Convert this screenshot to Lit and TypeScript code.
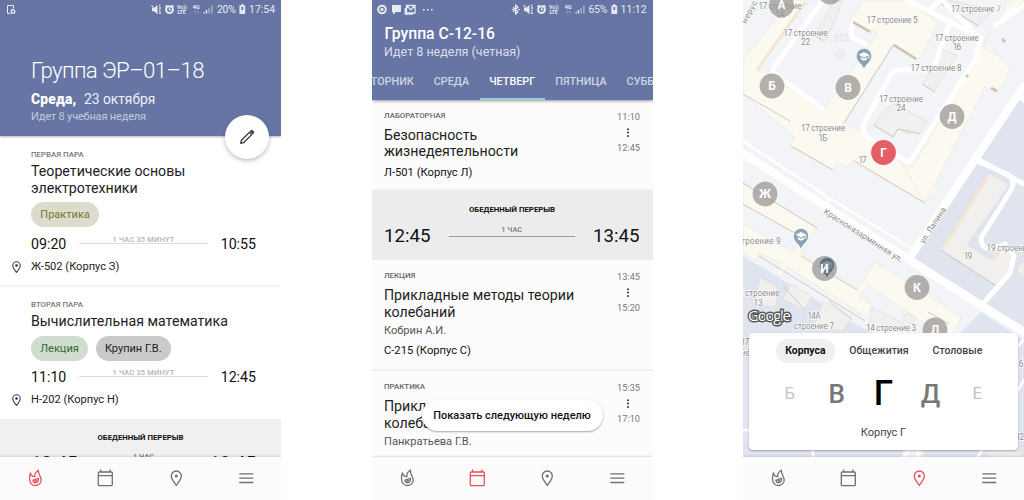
import { LitElement, html, css, svg } from "lit";
import { customElement, property } from "lit/decorators.js";

const flame = svg`<path d="M-4.9 -4.8C-6.2 -2.2 -6 0.2 -5.7 2C-5.1 5.4 -2.8 7.5 0.2 7.5C3.5 7.5 5.9 5 5.9 1.9C5.9 -1.3 3 -3 3 -7.7C0.8 -6.4 -0.9 -4 -0.5 -1.3C-2.4 -1.2 -4.2 -2.2 -4.9 -4.8Z"/><path d="M3.2 0.4C1.4 0.4 0.2 1.9 -2.3 2.2C-2.2 4 -1 4.7 0.3 4.7C2.4 4.7 3.3 2.8 3.2 0.4ZM-0.6 3.3L1.6 2.3" />`;
const calendar = svg`<rect x="-7" y="-6" width="14" height="13.7" rx="1"/><path d="M-7 -2.3H7M-4.7 -8.5V-6M4.7 -8.5V-6"/>`;
const pin = svg`<path d="M0 7.3C-2.6 3.9 -5 1.2 -5 -2A5 5 0 0 1 5 -2C5 1.2 2.6 3.9 0 7.3Z"/><circle cx="0" cy="-2" r="1.6" fill="currentColor" stroke="none"/>`;
const menu = svg`<path d="M-7 -4.1H7M-7 0.2H7M-7 4.5H7"/>`;

@customElement("bottom-nav")
class BottomNav extends LitElement {
  @property({ type: Number }) active = 0;
  static styles = css`
    :host { display: grid; grid-template-columns: repeat(4, 1fr); height: 43px; flex: none; background: #fbfbfb; box-shadow: 0 -1px 2px rgba(0,0,0,.12); position: relative; }
    svg { display: block; width: 24px; height: 24px; margin: 9px auto 0; fill: none; stroke: currentColor; stroke-width: 1.3; color: #707070; }
    svg.on { color: #e8505b; }
  `;
  render() {
    return [flame, calendar, pin, menu].map((i, n) => html`<svg class=${n === this.active ? "on" : ""} viewBox="-12.3 -12 24 24">${i}</svg>`);
  }
}

@customElement("status-bar")
class StatusBar extends LitElement {
  @property() battery = "";
  @property() time = "";
  @property({ type: Boolean }) busy = false;
  static styles = css`
    :host { display: flex; justify-content: space-between; height: 20px; padding: 0 6px 0 5px; color: #e6e9f1; font: 400 10.4px/20px Roboto, sans-serif; }
    svg { display: block; height: 20px; overflow: visible; fill: none; stroke: currentColor; }
    .right { display: flex; }
    .pct { width: 21px; letter-spacing: -.25px; white-space: nowrap; }
    .time { width: 29px; text-align: right; }
    text { fill: currentColor; stroke: none; font-family: Roboto, sans-serif; font-weight: 700; }
    .dim { opacity: .45; }
    .solid { fill: currentColor; stroke: none; }
    .level { stroke: #6675a3; stroke-width: 1.8; }
  `;
  render() {
    return html`
      ${this.busy
        ? html`<svg width="60" viewBox="0 0 60 20"><circle cx="5" cy="9.5" r="3.8" stroke-width="2"/><rect class="solid" x="3.6" y="8.1" width="2.8" height="2.8"/><path class="solid" d="M15 5h9v7h-5l-3 2.5V12h-1z"/><path d="M29.5 5.5h8.5v7.5h-8.5zM28.2 8v6.2H36M30 6l3.8 3.9 3.7-3.9" stroke-width="1.3"/><path class="solid" d="M46 9h1.6v1.6H46zM50 9h1.6v1.6H50zM54 9h1.6v1.6H54z"/></svg>`
        : html`<svg width="20" viewBox="0 0 20 20"><path d="M5.5 13.5H2.5V5.5H8.5V8.5"/><circle cx="8" cy="11.6" r="1.8" stroke-width="1.4"/></svg>`}
      <div class="right">
        <svg width="78" viewBox="0 0 78 20">
          ${this.busy ? svg`<path stroke-width="1.2" d="M2 7.3L7 11.8L4.6 14V5L7 7.2L2 11.7M.8 9.5H2.8M7 9.5H9"/>` : ""}
          <path class="solid" d="M13 8h2l3.5-3v9L15 11.3h-2z"/><path d="M12.5 5L18.5 13.5" stroke-width="1.1"/><path d="M20 5.5h1.5M20 8h2M20 10.5h1.5M20 13h2" stroke-width="1.3"/>
          <circle cx="30.5" cy="9.7" r="3.4" stroke-width="2"/><path d="M30.5 7.8V10h1.7M26.3 7l2-2M34.7 7l-2-2" stroke-width="1.2"/>
          <text x="38" y="8.8" font-size="5.2">Vo))</text><text x="38.4" y="13.9" font-size="5.2">LTE</text>
          <text x="53.5" y="8.8" font-size="5.8">4G</text><path class="dim" d="M56 10.5v3M59 10.5v3" />
          <path class="solid" d="M64.5 12h1.3v1.5h-1.3zM66.7 10h1.5v3.5h-1.5z"/><path class="solid dim" d="M69.3 8h1.7v5.5h-1.7zM72 5.5h1.7v8H72z"/>
        </svg>
        <span class="pct">${this.battery}</span>
        <svg width="8" viewBox="0 0 8 20"><path class="solid" d="M3 4.2h2.6v1.2h1.6v8.6H1.4V5.4H3z"/><path class="level" d="M4.3 7v3"/></svg>
        <span class="time">${this.time}</span>
      </div>`;
  }
}

const pause = css`
  .break { box-sizing: border-box; height: 69px; padding: 14px 0 0; background: #ececec; }
  .break-title { font: 700 7.8px/10px Roboto, sans-serif; color: #111; text-align: center; }
  .span { display: flex; align-items: flex-start; color: #111; }
  .span.big { margin: 9.5px 13px 0 12.5px; font: 400 18.7px/22px Roboto, sans-serif; }
  .rule { flex: 1; text-align: center; border-bottom: 1px solid #9a9a9a; color: #777; }
  .big .rule { margin: 0 18px; height: 11px; font: 500 7.4px/9px Roboto, sans-serif; }
`;

@customElement("today-screen")
class TodayScreen extends LitElement {
  static styles = [pause, css`
    :host { display: flex; flex-direction: column; width: 281px; height: 500px; background: #fff; position: relative; overflow: hidden; font-family: Roboto, sans-serif; }
    .head { box-sizing: border-box; height: 136px; flex: none; background: #6675a3; color: #fff; box-shadow: 0 1px 2px rgba(0,0,0,.3); }
    .group { margin: 36px 0 0 31px; font: 300 22.3px/28px Roboto, sans-serif; letter-spacing: -.63px; }
    .date { margin: 6px 0 0 31px; font: 400 13.8px/18px Roboto, sans-serif; color: #eef0f6; }
    .date b { font-weight: 900; color: #fff; letter-spacing: .2px; margin-right: 7.5px; }
    .week { margin: 2px 0 0 31px; font: 400 11px/14px Roboto, sans-serif; letter-spacing: -.17px; color: #c3cadd; }
    .fab { position: absolute; left: 225px; top: 115px; width: 44px; height: 44px; border-radius: 50%; background: #fff; box-shadow: 0 2px 4px rgba(0,0,0,.25); }
    .fab svg { display: block; margin: 14px; width: 16px; height: 16px; }
    .body { flex: 1; min-height: 0; overflow: hidden; }
    .lesson { padding: 14px 25px 11px 31px; border-bottom: 2px solid #f5f5f5; }
    .lesson + .lesson { padding: 13px 25px 12px 31px; border-bottom: 0; }
    .no { font: 500 7.9px/10px Roboto, sans-serif; color: #777; }
    .name { margin-top: 3px; font: 400 14.2px/16.6px Roboto, sans-serif; color: #222; white-space: pre-line; }
    .chips { display: flex; gap: 7.5px; margin-top: 6px; }
    .chip { height: 25px; padding: 0 9.3px; border-radius: 13px; font: 400 11px/26px Roboto, sans-serif; }
    .olive { background: #dcdccd; color: #767630; }
    .green { background: #d0dccf; color: #2f6b2c; }
    .gray { background: #cacaca; color: #222; }
    .small { margin-top: 7.5px; font: 400 14.2px/18px Roboto, sans-serif; }
    .small .rule { margin: 0 12.5px; height: 8px; font: 500 7.4px/9px Roboto, sans-serif; letter-spacing: .2px; color: #b4b4b4; border-color: #ddd; }
    .room { display: flex; align-items: center; margin: 7px 0 0 -19px; font: 400 11.1px/14px Roboto, sans-serif; color: #222; }
    .lesson + .lesson .chips { margin-top: 6.4px; }
    .lesson + .lesson .room { margin-top: 6.6px; }
    .room svg { width: 9px; height: 12px; margin-right: 10px; fill: none; stroke: #444; stroke-width: 1.5; }
    .body .break { background: #f0f0f0; }
    .body .big { margin: 9.5px 25px 0 31px; }
    .body .big .rule { margin: 0 2px; border: 0; }
  `];
  lesson(no: string, name: string, chips: string[][], from: string, to: string, room: string) {
    return html`<div class="lesson">
      <div class="no">${no}</div><div class="name">${name}</div>
      <div class="chips">${chips.map(([c, t]) => html`<span class="chip ${c}">${t}</span>`)}</div>
      <div class="span small"><span>${from}</span><span class="rule">1 ЧАС 35 МИНУТ</span><span>${to}</span></div>
      <div class="room"><svg viewBox="-6 -8 12 16">${pin}</svg>${room}</div>
    </div>`;
  }
  render() {
    return html`
      <div class="head">
        <status-bar battery="20%" time="17:54"></status-bar>
        <div class="group">Группа ЭР–01–18</div>
        <div class="date"><b>Среда,</b>23 октября</div>
        <div class="week">Идет 8 учебная неделя</div>
      </div>
      <div class="body">
        ${this.lesson("ПЕРВАЯ ПАРА", "Теоретические основы\nэлектротехники", [["olive", "Практика"]], "09:20", "10:55", "Ж-502 (Корпус З)")}
        ${this.lesson("ВТОРАЯ ПАРА", "Вычислительная математика", [["green", "Лекция"], ["gray", "Крупин Г.В."]], "11:10", "12:45", "Н-202 (Корпус Н)")}
        <div class="break"><div class="break-title">ОБЕДЕННЫЙ ПЕРЕРЫВ</div>
          <div class="span big"><span>12:45</span><span class="rule">1 ЧАС</span><span>13:45</span></div></div>
      </div>
      <bottom-nav .active=${0}></bottom-nav>
      <div class="fab"><svg viewBox="0 0 16 16" fill="none" stroke="#333" stroke-width="1.3"><path d="M1.8 14.2L2.4 11.3L10.4 3.3L12.7 5.6L4.7 13.6Z"/><path d="M11.6 2.1L13.9 4.4L14.5 3.2L12.8 1.5Z" fill="#333"/></svg></div>`;
  }
}

@customElement("week-screen")
class WeekScreen extends LitElement {
  static styles = [pause, css`
    :host { display: flex; flex-direction: column; width: 281px; height: 500px; background: #fcfcfc; position: relative; overflow: hidden; font-family: Roboto, sans-serif; }
    .head { box-sizing: border-box; height: 100px; flex: none; background: #6675a3; color: #fff; box-shadow: 0 1px 3px rgba(0,0,0,.4); }
    .group { margin: 5px 0 0 13px; font: 500 15.7px/18px Roboto, sans-serif; }
    .week { margin: 1px 0 0 12.5px; font: 400 12.5px/16px Roboto, sans-serif; color: #dbdfeb; }
    .tabs { display: flex; gap: 20px; width: 281px; overflow: hidden; height: 36px; margin-top: 4px; box-sizing: border-box; font: 500 10.8px/36px Roboto, sans-serif; color: #ced4e3; }
    .tab:first-child { margin-left: -7.4px; }
    .tab { white-space: nowrap; box-sizing: border-box; height: 36px; }
    .tab.on { color: #fff; border-bottom: 2px solid #8fd0cf; padding: 0 9.5px; margin: 0 -9.5px; }
    .body { flex: 1; min-height: 0; overflow: hidden; }
    .lesson { display: flex; justify-content: space-between; padding: 11px 12.5px 11px; border-bottom: 2px solid #f0f0f0; }
    .lesson:first-child { padding-bottom: 9px; }
    .kind { font: 500 7.9px/10px Roboto, sans-serif; color: #666; }
    .name { margin-top: 6px; font: 400 14.2px/16.4px Roboto, sans-serif; color: #222; white-space: pre-line; }
    .who { margin-top: 4px; font: 400 11.1px/14px Roboto, sans-serif; color: #555; }
    .room { margin-top: 6.3px; font: 400 11.2px/14px Roboto, sans-serif; color: #111; }
    .when { display: flex; flex-direction: column; align-items: flex-end; font: 400 9.2px/12px Roboto, sans-serif; color: #777; }
    .when svg { display: block; width: 4px; height: 12px; margin: 3.5px 10px 3.5px 0; fill: #333; }
    .pill { position: absolute; left: 50px; top: 400px; width: 181px; height: 31px; border-radius: 16px; background: #fff; box-shadow: 0 1px 2px rgba(0,0,0,.35); font: 500 11px/32px Roboto, sans-serif; text-align: center; color: #111; }
  `];
  lesson(kind: string, name: string, who: string, room: string, from: string, to: string) {
    return html`<div class="lesson"><div><div class="kind">${kind}</div><div class="name">${name}</div>
      ${who ? html`<div class="who">${who}</div>` : ""}${room ? html`<div class="room">${room}</div>` : ""}</div>
      <div class="when"><span>${from}</span><svg viewBox="0 0 4 12"><circle cx="2" cy="2.2" r="1"/><circle cx="2" cy="5.6" r="1"/><circle cx="2" cy="9" r="1"/></svg><span>${to}</span></div></div>`;
  }
  render() {
    return html`
      <div class="head">
        <status-bar busy battery="65%" time="11:12"></status-bar>
        <div class="group">Группа С-12-16</div>
        <div class="week">Идет 8 неделя (четная)</div>
        <div class="tabs">${["ВТОРНИК", "СРЕДА", "ЧЕТВЕРГ", "ПЯТНИЦА", "СУББОТА"].map((d) => html`<span class="tab ${d === "ЧЕТВЕРГ" ? "on" : ""}">${d}</span>`)}</div>
      </div>
      <div class="body">
        ${this.lesson("ЛАБОРАТОРНАЯ", "Безопасность\nжизнедеятельности", "", "Л-501 (Корпус Л)", "11:10", "12:45")}
        <div class="break"><div class="break-title">ОБЕДЕННЫЙ ПЕРЕРЫВ</div>
          <div class="span big"><span>12:45</span><span class="rule">1 ЧАС</span><span>13:45</span></div></div>
        ${this.lesson("ЛЕКЦИЯ", "Прикладные методы теории\nколебаний", "Кобрин А.И.", "С-215 (Корпус С)", "13:45", "15:20")}
        ${this.lesson("ПРАКТИКА", "Прикладные методы теории\nколебаний", "Панкратьева Г.В.", "", "15:35", "17:10")}
      </div>
      <bottom-nav .active=${1}></bottom-nav>
      <div class="pill">Показать следующую неделю</div>`;
  }
}

const labels: [number, number, string, number][] = [
  [37, 9, "17 строение", 43], [37, 18, "1А", 9],
  [62.5, 35.5, "17 строение", 44], [62.5, 44.5, "22", 9],
  [149, 23, "17 строение 5", 51], [233, 12, "17 строение 7", 50],
  [213.5, 40.5, "17 строение", 44], [214, 49.5, "16", 8],
  [193, 71, "17 строение 8", 51], [158, 102, "17 строение", 44], [158, 111, "24", 9],
  [80, 131, "17 строение", 44], [80, 140.5, "1Б", 9], [119.5, 162.5, "17", 8],
  [12, 244, "7 строение 9", 51], [225, 259, "19", 8], [266, 251, "19 строение", 45],
  [14, 296, "14 строение", 45], [15, 305.5, "13", 9], [71, 318.5, "14А", 13],
  [71, 328.5, "строение 7", 40], [148, 331, "14 строение 3", 50],
  [2, 345, "17", 8], [-10, 356, "строение", 34], [278, 367, "6", 4], [277, 440, "12", 8],
];
const pins: [number, number, string, string][] = [
  [38.5, 5, "А", ""], [87, -8, "", ""], [29, 86, "Б", ""], [105, 87.5, "В", ""], [209, 116.5, "Д", ""],
  [140.5, 152.5, "Г", "hot"], [22, 194, "Ж", ""], [81.5, 268.5, "И", ""], [174, 287.5, "К", ""], [192, 330, "Л", ""],
];

@customElement("map-screen")
class MapScreen extends LitElement {
  static styles = css`
    :host { display: flex; flex-direction: column; width: 281px; height: 500px; position: relative; overflow: hidden; font-family: Roboto, sans-serif; }
    .map { display: block; width: 281px; height: 457px; flex: none; font-family: Roboto, sans-serif; }
    .ground { fill: #f3f4f7; } .zone { fill: #dfe4ee; } .park { fill: #eee9ec; }
    .bld { fill: #fcf9f1; stroke: #eeeae0; stroke-width: .8; } .bld2 { fill: #f1f0ef; stroke: #dfdfde; stroke-width: .8; }
    .road { fill: none; stroke: #fff; stroke-width: 5; stroke-linejoin: round; stroke-linecap: round; }
    .main { stroke-width: 8; } .thin { stroke-width: 2.6; }
    .edge { fill: none; stroke: #c9c5bd; stroke-width: .9; } .tan { fill: none; stroke: #f5e6d2; stroke-width: 3; } .wall { fill: none; stroke: #cfc2ac; stroke-width: 2.6; }
    .lbl { font-size: 8.2px; fill: #8c8c8c; stroke: #fbfbfb; stroke-width: 1.4; paint-order: stroke; text-anchor: middle; }
    .street { text-anchor: start; }
    .dot { fill: #9d9b98; fill-opacity: .78; } .dot.hot { fill: #e55d65; fill-opacity: 1; }
    .let { font-size: 12px; font-weight: 700; fill: #fff; text-anchor: middle; }
    .edu { fill: #89a4b5; } .cap { fill: #fff; }
    .shade .edu { fill: #5f7482; } .shade .cap { fill: #8d9aa3; }
    .google { font: 500 15px "Open Sans", sans-serif; fill: #fff; stroke: #555; stroke-width: 2.8; paint-order: stroke; }
    .ghost { fill: #fff; fill-opacity: .75; font-size: 10.5px; }
    .card { position: absolute; left: 6px; top: 333px; width: 269px; height: 117px; box-sizing: border-box; border-radius: 4px; background: #fff; box-shadow: 0 1px 2px rgba(0,0,0,.3); padding-top: 6px; }
    .tabs { display: grid; grid-template-columns: 58.7px 88.6px 68.4px; margin: 0 0 0 27px; height: 23px; font: 500 10.5px/24px Roboto, sans-serif; color: #444; text-align: center; justify-content: start; }
    .tabs span { white-space: nowrap; }
    .tabs .on { background: #f0f0f0; border-radius: 12px; color: #111; font-weight: 700; font-size: 10.4px; }
    .wheel { display: grid; grid-template-columns: repeat(5, 46.9px); justify-content: center; align-items: center; height: 50px; margin-top: 7px; text-align: center; color: #777; font: 500 26px/50px Roboto, sans-serif; }
    .far { font-size: 16.6px; font-weight: 400; color: #c4c4c4; } .mid { font-size: 35px; color: #000; }
    .caption { margin-top: 7px; text-align: center; font: 400 11px/14px Roboto, sans-serif; color: #444; }
  `;
  edu(x: number, y: number, c = "") {
    return svg`<g class=${c} transform="translate(${x} ${y})"><path class="edu" d="M0 12C-1 7 -7.3 5 -7.3 -1A7.3 7.3 0 0 1 7.3 -1C7.3 5 1 7 0 12Z"/><path class="cap" d="M0 -5L5.4 -2.2L0 .6L-5.4 -2.2ZM-3.2 0L0 1.7L3.2 0V2.2L0 3.8L-3.2 2.2ZM4.4 -2H5.3V1.8H4.4Z"/></g>`;
  }
  render() {
    return html`
      <svg class="map" viewBox="0 0 281 457">
        <rect class="ground" width="281" height="457"/>
        <path class="zone" d="M281 97L270 104L231 164L168 262L240 306L281 333V97Z"/>
        <path class="zone" d="M0 256L60 290L160 350V457H0ZM238 312L281 340V457H180V370Z"/>
        <path class="ground" d="M0 256L115 325L180 360V290L100 260L0 210Z"/>
        <path class="bld" d="M48 0H66L14 71L29 76L80 111L135 33L107 20L121 0H165L195 23L176 59L150 44L101 123L127 138L168 170L195 188L182 203L110 162L104 167L95 162L90 170L48 146L52 137L0 94V60Z"/>
        <path class="bld" d="M281 0L236 47L254 55L268 68L255 93L242 87L182 203L160 165L170 167L238 47L281 -20Z"/>
        <path class="bld" d="M0 183L74 228L58 254L115 289L132 262L219 317L206 340L125 285L115 297L130 306L122 316L44 267L39 276L34 273L38 263L16 253L13 260L0 253V224L50 252L58 237L0 204Z"/>
        <path class="bld2" d="M247 174L266 185L255 201L224 245L250 261L260 247L273 261L255 287L198 250ZM281 260L274 270L281 277Z"/>
        <path class="tan" d="M14 70L62 2M199 250L246 175M248 261L254 250"/>
        <path class="bld2" d="M71 35L92 0H100L83 41ZM92 35H105V41H92ZM97 49L102 52L97 60L92 56ZM143 108L131 125L150 137L155 129L165 134L171 131L177 134L184 121L152 104ZM200 50L214 55L191 91L179 84ZM197 3L205 0L250 10L235 26ZM17 277L34 287L33 306H12ZM48 284L69 296L61 310L40 299ZM80 301L108 318L100 330H70ZM129 307L172 330H125ZM164 313L173 318L169 324L160 320Z"/>
        <path class="edge" d="M0 94L47 121M48 146L90 170M71 35L80 41M101 123L151 44M131 125L150 137L155 129L177 134M179 84L192 92M197 3L236 26M0 183L74 228M0 204L50 232M58 256L114 290M16 256L122 321M185 312L206 324M86 301L109 319M198 250L255 287M110 160L182 203M40 286L62 310"/>
        <path class="road" d="M30 73L80 109M30 68L80 0M199 0L238 39L232 60L166 163L128 140Q117 133 121 123L147 76Q150 70 156 70H190L207 22M110 22Q106 34 110 38L122 44M281 5L252 26M187 10L198 0"/>
        <path class="road" d="M164 0L207 22L239 39"/>
        <path class="road thin" d="M0 141L86 198L170 249M86 198L82 207"/>
        <path class="road main" d="M281 86L166 259"/>
        <path class="road main" d="M-5 150L80 205L165 259L244 309L285 334"/>
        <path class="road" d="M232 160L266 175Q273 182 268 190L238 238Q238 248 247 249L262 244L271 256L267 273L238 306M234 159L281 184M276 94L281 100" />
        <path class="wall" d="M110 22L127 32M151 45L173 59M223 75L225 77M248 88L254 91M259 39L262 42"/>
        <path class="park" d="M170 390L270 440L281 457H250L160 410Z"/>
        <path class="road thin" d="M0 430H70V457M175 457V440M235 457L281 380M281 340L160 457"/>
        ${this.edu(121, 57)}${this.edu(58, 237)}
        ${labels.map(([x, y, t, w]) => svg`<text class="lbl" x=${x} y=${y} textLength=${w}>${t}</text>`)}
        <text class="lbl street" transform="translate(80 213) rotate(32.5)" textLength="92">Красноказарменная ул.</text>
        <text class="lbl street" transform="translate(181 244) rotate(-57)" textLength="41">ул. Лапина</text>
        <text class="lbl street" transform="translate(3 24) rotate(-62)" textLength="34">нерусть</text>
        ${pins.map(([x, y, t, c]) => svg`<circle class="dot ${c}" cx=${x} cy=${y} r="12.4"/>`)}
        ${this.edu(84, 266, "shade")}
        ${pins.map(([x, y, t]) => svg`<text class="let" x=${x} y=${y + 4.4}>${t}</text>`)}
        <text class="google" x="5" y="321" textLength="43">Google</text>
        <text class="ghost" x="248" y="13" textLength="26">17:55</text>
      </svg>
      <div class="card">
        <div class="tabs"><span class="on">Корпуса</span><span>Общежития</span><span>Столовые</span></div>
        <div class="wheel"><span class="far">Б</span><span>В</span><span class="mid">Г</span><span>Д</span><span class="far">Е</span></div>
        <div class="caption">Корпус Г</div>
      </div>
      <bottom-nav .active=${2}></bottom-nav>`;
  }
}

@customElement("app-root")
class AppRoot extends LitElement {
  static styles = css`
    :host { display: flex; justify-content: space-between; width: 1024px; height: 500px; background: #fff; overflow: hidden; }
  `;
  render() {
    return html`<today-screen></today-screen><week-screen></week-screen><map-screen></map-screen>`;
  }
}
